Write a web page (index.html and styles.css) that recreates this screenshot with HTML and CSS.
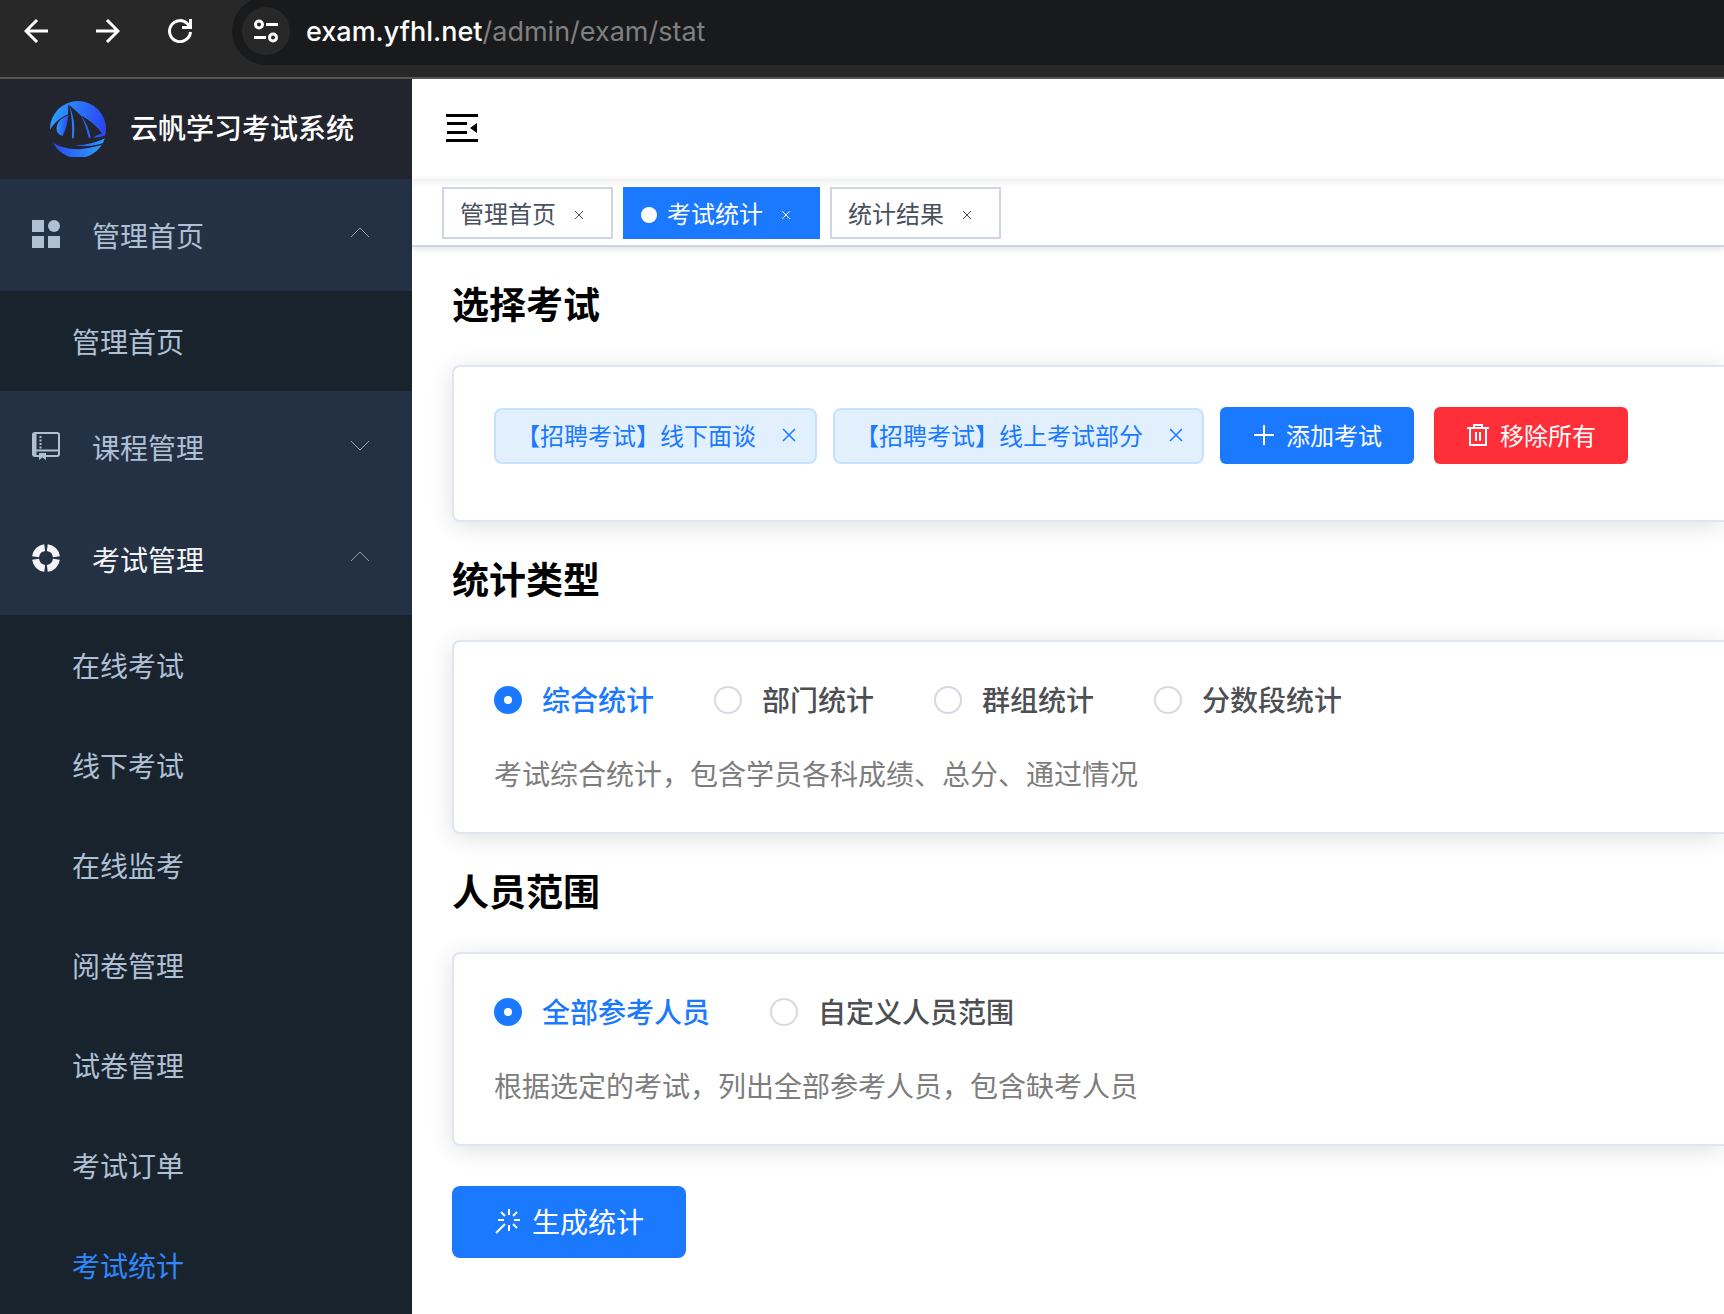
FILE: index.html
```html
<!DOCTYPE html>
<html lang="zh-CN">
<head>
<meta charset="utf-8">
<meta name="viewport" content="width=device-width, initial-scale=1">
<title>云帆学习考试系统</title>
<link rel="stylesheet" href="styles.css">
</head>
<body>
<div class="browser-bar">
  <button class="nav-btn" type="button" aria-label="后退">
    <svg width="24" height="24" viewBox="0 0 24 24" fill="none" stroke="currentColor" stroke-width="3"><path d="M24 12H2M13 1 2 12l11 11"/></svg>
  </button>
  <button class="nav-btn" type="button" aria-label="前进">
    <svg width="24" height="24" viewBox="0 0 24 24" fill="none" stroke="currentColor" stroke-width="3"><path d="M0 12h22M11 1l11 11-11 11"/></svg>
  </button>
  <button class="nav-btn" type="button" aria-label="刷新">
    <svg width="24" height="24" viewBox="0 0 24 24" fill="none" stroke="currentColor" stroke-width="3"><path d="M22.500 13A10.500 10.500 0 1 1 19.500 4.700L22 8M22.500 0v8.500H14"/></svg>
  </button>
  <div class="address">
    <button class="site-info" type="button" aria-label="网站信息">
      <svg width="24" height="24" viewBox="0 0 24 24" fill="none" stroke="currentColor" stroke-width="3"><circle cx="5" cy="5.500" r="3.500"/><path d="M12 5.500h12M0 18.500h12"/><circle cx="19" cy="18.500" r="3.500"/></svg>
    </button>
    <p class="url">exam.yfhl.net<span class="url-path">/admin/exam/stat</span></p>
  </div>
</div>

<div class="app">
  <aside class="sidebar">
    <div class="brand">
      <svg class="brand-logo" width="56" height="56" viewBox="0 0 168 168">
        <defs>
          <linearGradient id="sky" x1="0" y1="0" x2="1" y2="0.200"><stop offset="0" stop-color="#2ca4ff"/><stop offset="1" stop-color="#2a48f2"/></linearGradient>
          <linearGradient id="sea" x1="0" y1="0" x2="1" y2="0"><stop offset="0" stop-color="#2a48f2"/><stop offset="1" stop-color="#2ca4ff"/></linearGradient>
        </defs>
        <circle cx="84" cy="84" r="84" fill="url(#sky)"/>
        <path d="M6 118C40 150 120 152 166 106A84 84 0 0 1 6 118z" fill="url(#sea)"/>
        <path d="M-2 90C10 68 30 50 54 40L55 11C74 24 85 36 93 44C116 54 142 76 156 98C148 98 140 102 130 110C144 110 158 106 170 102L164 118C124 152 52 152 10 126L-4 112z" fill="#22242e"/>
        <path d="M55 43C30 52 18 68 20 88C22 98 30 104 38 105C48 84 54 64 55 43z" fill="url(#sky)"/>
        <path d="M58 14C72 46 76 80 71 112L66 112C68 80 66 46 58 14z" fill="#2e7dff"/>
        <path d="M93 44C108 62 118 86 122 110L116 110C110 86 104 64 93 44z" fill="#2c62fa"/>
        <path d="M74 133C110 132 140 125 165 112L157 126C132 136 104 138 74 133z" fill="url(#sea)"/>
        <path d="M90 137C116 138 140 134 160 125L154 132C132 140 108 141 90 137z" fill="#22242e"/>
      </svg>
      <h1 class="brand-name">云帆学习考试系统</h1>
    </div>
    <nav class="menu">
      <button class="menu-title" type="button" aria-expanded="true">
        <svg class="menu-icon" viewBox="0 0 28 28" fill="currentColor"><path d="M0 0h12v12H0zM0 16h12v12H0zM16 16h12v12H16z"/><circle cx="22" cy="6" r="6"/></svg>
        <span class="menu-text">管理首页</span>
        <svg class="chevron" viewBox="0 0 24 24"><path d="M3 15l9-9 9 9"/></svg>
      </button>
      <ul class="submenu">
        <li><a class="submenu-link" href="#home">管理首页</a></li>
      </ul>
      <button class="menu-title" type="button" aria-expanded="false">
        <svg class="menu-icon" viewBox="0 0 28 28" fill="none" stroke="currentColor" stroke-width="2"><rect x="1" y="1" width="26" height="23" rx="2"/><path d="M4 18.500h23"/><path d="M2.500 2v21" stroke-width="4"/><path d="M8.500 4v13" stroke-dasharray="2 1.500"/><path d="M7 21h7v7l-3.500-2.500L7 28z" fill="currentColor" stroke="none"/></svg>
        <span class="menu-text">课程管理</span>
        <svg class="chevron" viewBox="0 0 24 24"><path d="M3 7l9 9 9-9"/></svg>
      </button>
      <button class="menu-title current" type="button" aria-expanded="true">
        <svg class="menu-icon" viewBox="0 0 28 28" fill="none" stroke="currentColor" stroke-width="7"><path d="M15.300 3.600A10.500 10.500 0 0 1 24.400 12.700M24.400 15.300A10.500 10.500 0 0 1 15.300 24.400M12.700 24.400A10.500 10.500 0 0 1 3.600 15.300M3.600 12.700A10.500 10.500 0 0 1 12.700 3.600"/></svg>
        <span class="menu-text">考试管理</span>
        <svg class="chevron" viewBox="0 0 24 24"><path d="M3 15l9-9 9 9"/></svg>
      </button>
      <ul class="submenu">
        <li><a class="submenu-link" href="#online">在线考试</a></li>
        <li><a class="submenu-link" href="#offline">线下考试</a></li>
        <li><a class="submenu-link" href="#monitor">在线监考</a></li>
        <li><a class="submenu-link" href="#marking">阅卷管理</a></li>
        <li><a class="submenu-link" href="#papers">试卷管理</a></li>
        <li><a class="submenu-link" href="#orders">考试订单</a></li>
        <li><a class="submenu-link active" href="#stat" aria-current="page">考试统计</a></li>
      </ul>
    </nav>
  </aside>

  <div class="workspace">
    <header class="topbar">
      <button class="fold" type="button" aria-label="收起菜单">
        <svg width="32" height="28" viewBox="0 0 32 28"><path d="M0 0h32v3H0zM1 8h20v3H1zM1 17h20v3H1zM0 25h32v3H0zM31 9v10l-7-5z" fill="#000"/></svg>
      </button>
    </header>
    <div class="tabs">
      <div class="tab"><a class="tab-link" href="#home">管理首页</a><button class="tab-close" type="button" aria-label="关闭管理首页"><svg width="10" height="10" viewBox="0 0 10 10"><path d="M1 1l8 8M9 1 1 9"/></svg></button></div>
      <div class="tab active"><span class="tab-dot"></span><a class="tab-link" href="#stat">考试统计</a><button class="tab-close" type="button" aria-label="关闭考试统计"><svg width="10" height="10" viewBox="0 0 10 10"><path d="M1 1l8 8M9 1 1 9"/></svg></button></div>
      <div class="tab"><a class="tab-link" href="#result">统计结果</a><button class="tab-close" type="button" aria-label="关闭统计结果"><svg width="10" height="10" viewBox="0 0 10 10"><path d="M1 1l8 8M9 1 1 9"/></svg></button></div>
    </div>

    <main class="content">
      <h2 class="section-title">选择考试</h2>
      <section class="card exams">
        <span class="tag">【招聘考试】线下面谈<button class="tag-close" type="button" aria-label="移除线下面谈"><svg width="14" height="14" viewBox="0 0 28 28"><path d="M2 2l24 24M26 2 2 26"/></svg></button></span>
        <span class="tag">【招聘考试】线上考试部分<button class="tag-close" type="button" aria-label="移除线上考试部分"><svg width="14" height="14" viewBox="0 0 28 28"><path d="M2 2l24 24M26 2 2 26"/></svg></button></span>
        <div class="actions">
          <button class="btn primary" type="button"><svg width="24" height="24" viewBox="0 0 24 24"><path d="M12 2v20M2 12h20"/></svg>添加考试</button>
          <button class="btn danger" type="button"><svg width="24" height="24" viewBox="0 0 24 24"><path d="M1 5h22M4 5v17h16V5M8 5V2h8v3M10 9v9M14 9v9"/></svg>移除所有</button>
        </div>
      </section>

      <h2 class="section-title" id="type-title">统计类型</h2>
      <section class="card">
        <div class="options" role="radiogroup" aria-labelledby="type-title">
          <label class="option"><input type="radio" name="type" checked><span>综合统计</span></label>
          <label class="option"><input type="radio" name="type"><span>部门统计</span></label>
          <label class="option"><input type="radio" name="type"><span>群组统计</span></label>
          <label class="option"><input type="radio" name="type"><span>分数段统计</span></label>
        </div>
        <p class="hint">考试综合统计，包含学员各科成绩、总分、通过情况</p>
      </section>

      <h2 class="section-title" id="scope-title">人员范围</h2>
      <section class="card">
        <div class="options" role="radiogroup" aria-labelledby="scope-title">
          <label class="option"><input type="radio" name="scope" checked><span>全部参考人员</span></label>
          <label class="option"><input type="radio" name="scope"><span>自定义人员范围</span></label>
        </div>
        <p class="hint">根据选定的考试，列出全部参考人员，包含缺考人员</p>
      </section>

      <button class="btn primary large" type="button"><svg width="28" height="28" viewBox="0 0 28 28"><path d="M15 2v6M15 18v6M4 13h6M20 13h6M7 5l4 4M23 5l-4 4M19 17l4 4M11 17l-9 9"/></svg>生成统计</button>
    </main>
  </div>
</div>
</body>
</html>
```
FILE: styles.css
```css
* {
  box-sizing: border-box;
}

:root {
  --blue: #1a79ff;
  --menu-text: #b0c0d4;
  --tab-line: #d0d5e5;
}

body {
  margin: 0;
  height: 100vh;
  display: flex;
  flex-direction: column;
  overflow: hidden;
  background: #fff;
  font-family: "Noto Sans CJK SC", sans-serif;
  font-size: 28px;
  line-height: 36px;
}

button {
  padding: 0;
  border: 0;
  background: none;
  color: inherit;
  font: inherit;
  cursor: pointer;
}

a {
  color: inherit;
  text-decoration: none;
}

h1, h2, p, ul {
  margin: 0;
  padding: 0;
  font-size: inherit;
}

ul {
  list-style: none;
}

svg {
  display: block;
  flex: none;
}

/* Browser toolbar */
.browser-bar {
  flex: none;
  display: flex;
  height: 79px;
  padding: 0 0 12px 24px;
  border-bottom: 2px solid #555;
  background: #282828;
  color: #fff;
  overflow: hidden;
}

.nav-btn {
  align-self: center;
  width: 24px;
  margin-right: 48px;
  padding-bottom: 4px;
}

.address {
  flex: 1;
  display: flex;
  align-items: center;
  gap: 16px;
  height: 68px;
  margin: -3px 0 0 -8px;
  padding-left: 10px;
  border-radius: 34px 0 0 34px;
  background: #191a1c;
}

.site-info {
  display: flex;
  align-items: center;
  justify-content: center;
  width: 48px;
  height: 48px;
  border-radius: 50%;
  background: #282828;
}

.url {
  padding-top: 2px;
  font-family: Inter, sans-serif;
  font-size: 27px;
  font-weight: 500;
}

.url-path {
  color: #808080;
  font-weight: 400;
}

/* Sidebar */
.app {
  flex: 1;
  min-height: 0;
  display: flex;
}

.sidebar {
  flex: none;
  width: 412px;
  overflow: hidden;
  background: #19232e;
  color: var(--menu-text);
}

.brand {
  display: flex;
  align-items: center;
  gap: 24px;
  height: 100px;
  padding-left: 50px;
  background: #22242e;
}

.brand-name {
  padding-bottom: 4px;
  color: #fff;
  font-weight: 500;
}

.menu-title {
  display: flex;
  align-items: center;
  gap: 32px;
  width: 100%;
  height: 112px;
  padding: 0 40px 0 32px;
  background: #243144;
}

.menu-title.current {
  color: #f4f4f5;
}

.menu-icon {
  width: 28px;
  height: 28px;
  margin-bottom: 2px;
}

.menu-text {
  flex: 1;
  text-align: left;
}

.chevron {
  width: 24px;
  height: 24px;
  margin-bottom: 2px;
  fill: none;
  stroke: #9a9ca1;
  stroke-width: 1;
}

.submenu-link {
  display: flex;
  align-items: center;
  height: 100px;
  padding-left: 72px;
}

.submenu-link.active {
  color: #3088ff;
}

/* Top bar and page tabs */
.workspace {
  flex: 1;
  min-width: 0;
  display: flex;
  flex-direction: column;
}

.topbar {
  flex: none;
  display: flex;
  align-items: center;
  height: 100px;
  padding: 0 0 2px 34px;
}

.tabs {
  flex: none;
  display: flex;
  align-items: center;
  gap: 10px;
  height: 68px;
  padding: 2px 0 0 30px;
  border-bottom: 2px solid var(--tab-line);
  background: linear-gradient(#f0f0f0, #fff 8px);
  box-shadow: 0 2px 6px rgba(0, 0, 0, 0.12);
}

.tab {
  display: flex;
  align-items: center;
  height: 52px;
  padding: 0 16px;
  border: 2px solid var(--tab-line);
  background: #fff;
  color: #495060;
  font-size: 24px;
}

.tab.active {
  border-color: var(--blue);
  background: var(--blue);
  color: #fff;
}

.tab-dot {
  width: 16px;
  height: 16px;
  margin: 4px 10px 0 0;
  border-radius: 50%;
  background: #fff;
}

.tab-close {
  display: flex;
  align-items: center;
  justify-content: center;
  width: 32px;
  height: 32px;
  margin-left: 7px;
  padding-top: 4px;
}

.tab-close svg,
.tag-close svg,
.btn svg {
  fill: none;
  stroke: currentColor;
  stroke-width: 1;
}

/* Page content */
.content {
  flex: 1;
  padding-left: 40px;
}

.section-title {
  margin: 34px 0 40px;
  color: #000;
  font-size: 37px;
  font-weight: 700;
  line-height: 44px;
}

.card {
  padding: 40px;
  border: 2px solid #e0e5f3;
  border-right: 0;
  border-radius: 8px 0 0 8px;
  background: #fff;
  box-shadow: 0 4px 24px rgba(0, 0, 0, 0.12);
}

.exams {
  display: flex;
  align-items: center;
  gap: 16px;
  padding-bottom: 56px;
}

.tag {
  display: flex;
  align-items: center;
  height: 56px;
  padding: 0 14px 2px 20px;
  border: 2px solid #c6e1ff;
  border-radius: 8px;
  background: #e2f0fe;
  color: var(--blue);
  font-size: 24px;
  white-space: nowrap;
}

.tag-close {
  display: flex;
  align-items: center;
  justify-content: center;
  width: 24px;
  height: 24px;
  margin-left: 21px;
}

.tag-close svg {
  stroke-width: 3;
}

.actions {
  display: flex;
  gap: 20px;
}

.btn {
  display: flex;
  align-items: center;
  gap: 10px;
  height: 57px;
  padding: 0 32px 2px;
  border-radius: 6px;
  color: #fff;
  font-size: 24px;
  white-space: nowrap;
}

.btn svg {
  stroke-width: 2;
}

.btn.primary {
  background: var(--blue);
}

.btn.danger {
  background: #ff2f3a;
}

.btn.large {
  height: 72px;
  margin-top: 40px;
  padding: 0 42px 2px;
  border-radius: 8px;
  font-size: 28px;
}

.options {
  display: flex;
  gap: 60px;
  margin-bottom: 37px;
}

.option {
  display: flex;
  align-items: center;
  gap: 20px;
  color: #4d4f53;
  font-weight: 500;
  line-height: 34px;
  white-space: nowrap;
}

.option span {
  padding-bottom: 2px;
}

.option input {
  appearance: none;
  width: 28px;
  height: 28px;
  margin: 0;
  border: 2px solid #d6d9e4;
  border-radius: 50%;
  background: #fff;
}

.option input:checked {
  border: 10px solid var(--blue);
}

.option input:checked + span {
  color: var(--blue);
}

.hint {
  padding-bottom: 1px;
  color: #7d7d7d;
}
```
